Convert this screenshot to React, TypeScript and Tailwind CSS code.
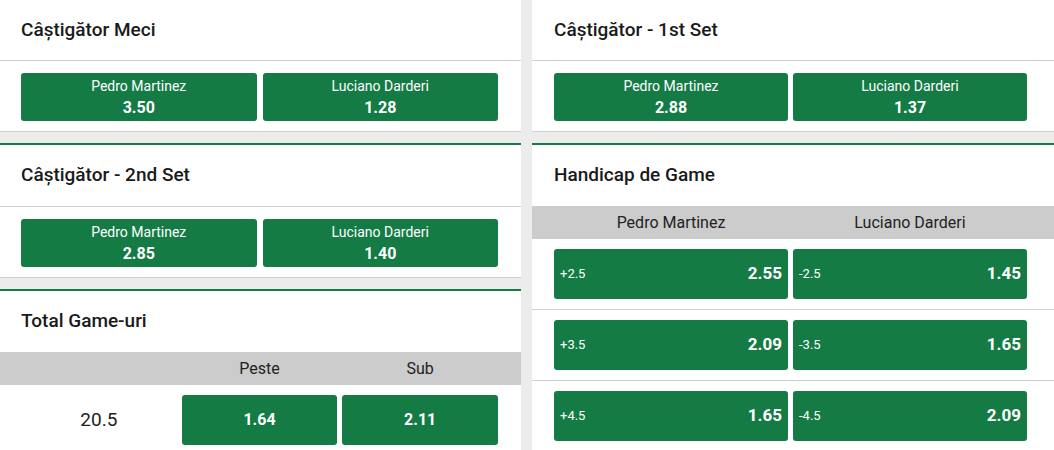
import React from "react";

const GREEN = "bg-[#147b45]";

function MarketButton({ name, odd }: { name: string; odd: string }) {
  return (
    <div className={`${GREEN} h-[48px] rounded-[3px] flex flex-col items-center justify-center text-white leading-none`}>
      <span className="text-[14px] leading-[18px]">{name}</span>
      <span className="text-[16px] font-bold leading-[20px] mt-[3px]">{odd}</span>
    </div>
  );
}

function Header({ title, first, pl }: { title: string; first?: boolean; pl: string }) {
  return (
    <div className={`${first ? "h-[60px]" : "h-[61px]"} flex items-center ${pl} text-[19px] font-medium text-[#1a1a1a]`}>
      {title}
    </div>
  );
}

function MarketCard({
  title,
  first,
  a,
  b,
  side,
}: {
  title: string;
  first?: boolean;
  a: string;
  b: string;
  side: "left" | "right";
}) {
  const pad = side === "left" ? "pl-[21px] pr-[23px]" : "pl-[22px] pr-[27px]";
  const gap = side === "left" ? "gap-[6px]" : "gap-[5px]";
  return (
    <div className={`bg-white ${first ? "" : "border-t-2 border-[#147b45]"} mb-[11px]`}>
      <div className="border-b border-[#d0d0d0]">
        <Header title={title} first={first} pl={side === "left" ? "pl-[21px]" : "pl-[22px]"} />
      </div>
      <div className={`pt-[12px] pb-[10px] border-b border-[#d0d0d0] grid grid-cols-2 ${gap} ${pad}`}>
        <MarketButton name="Pedro Martinez" odd={a} />
        <MarketButton name="Luciano Darderi" odd={b} />
      </div>
    </div>
  );
}

function HandicapRow({ a, ao, b, bo, last }: { a: string; ao: string; b: string; bo: string; last?: boolean }) {
  return (
    <div className={`py-[10px] pl-[22px] pr-[27px] grid grid-cols-2 gap-[5px] ${last ? "" : "border-b border-[#d0d0d0]"}`}>
      {[
        [a, ao],
        [b, bo],
      ].map(([h, o], i) => (
        <div key={i} className={`${GREEN} h-[50px] rounded-[3px] flex items-center justify-between px-[6px] text-white`}>
          <span className="text-[13px]">{h}</span>
          <span className="text-[17px] font-bold">{o}</span>
        </div>
      ))}
    </div>
  );
}

export default function App() {
  return (
    <div
      className="w-[1054px] h-[450px] overflow-hidden bg-[#ececec] flex gap-[11px]"
      style={{ fontFamily: "Roboto, 'Noto Sans', sans-serif" }}
    >
      <div className="w-[521px] flex flex-col">
        <MarketCard title="Câștigător Meci" first a="3.50" b="1.28" side="left" />
        <MarketCard title="Câștigător - 2nd Set" a="2.85" b="1.40" side="left" />
        <div className="bg-white border-t-2 border-[#147b45] flex-1">
          <Header title="Total Game-uri" pl="pl-[21px]" />
          <div className="bg-[#cccccc] h-[33px] grid grid-cols-3 gap-[5px] pl-[21px] pr-[23px] items-center text-[16px] text-[#222]">
            <span />
            <span className="text-center">Peste</span>
            <span className="text-center">Sub</span>
          </div>
          <div className="pt-[10px] grid grid-cols-3 gap-[5px] pl-[21px] pr-[23px] items-center">
            <span className="text-center text-[19px] text-[#222]">20.5</span>
            <div className={`${GREEN} h-[50px] rounded-[3px] flex items-center justify-center text-white text-[16px] font-bold`}>1.64</div>
            <div className={`${GREEN} h-[50px] rounded-[3px] flex items-center justify-center text-white text-[16px] font-bold`}>2.11</div>
          </div>
        </div>
      </div>
      <div className="flex-1 flex flex-col">
        <MarketCard title="Câștigător - 1st Set" first a="2.88" b="1.37" side="right" />
        <div className="bg-white border-t-2 border-[#147b45] flex-1">
          <Header title="Handicap de Game" pl="pl-[22px]" />
          <div className="bg-[#cccccc] h-[33px] grid grid-cols-2 gap-[5px] pl-[22px] pr-[27px] items-center text-[16px] text-[#222]">
            <span className="text-center">Pedro Martinez</span>
            <span className="text-center">Luciano Darderi</span>
          </div>
          <HandicapRow a="+2.5" ao="2.55" b="-2.5" bo="1.45" />
          <HandicapRow a="+3.5" ao="2.09" b="-3.5" bo="1.65" />
          <HandicapRow a="+4.5" ao="1.65" b="-4.5" bo="2.09" last />
        </div>
      </div>
    </div>
  );
}
